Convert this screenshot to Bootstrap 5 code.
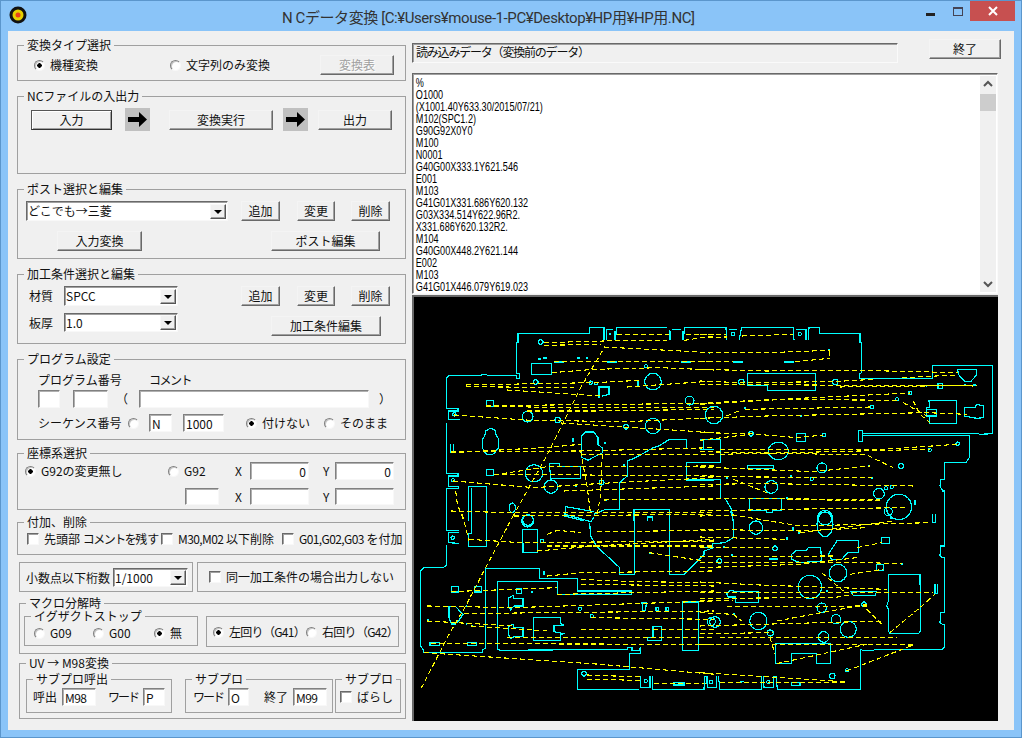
<!DOCTYPE html>
<html lang="ja">
  <head>
    <meta charset="UTF-8" />
    <meta name="viewport" content="width=device-width, initial-scale=1.0" />
    <title>NCデータ変換</title>
    <link href="https://cdn.jsdelivr.net/npm/bootstrap@5.3.0/dist/css/bootstrap.min.css" rel="stylesheet" />
    <style>
      html, body { margin: 0; width: 1022px; height: 738px; overflow: hidden; background: #8ac4f8; }
      body { font: 12px/14px "Noto Sans CJK JP", sans-serif; color: #111; }
      .win { width: 1022px; height: 738px; border: 1px solid #5b96cc; background: #8ac4f8; }
      .tbar { height: 30px; }
      .ticon { margin: 5px 0 0 8px; }
      .ttl { margin: 7px 0 0 255px; width: 653px; font: 15px/20px Roboto, "Noto Sans CJK JP", sans-serif; letter-spacing: -.42px; color: #333; white-space: nowrap; }
      .wmin { width: 9px; height: 3px; background: #222; margin: 12px 0 0 -9px; }
      .wmax { width: 10px; height: 9px; border: 1px solid #445; border-top-width: 2px; margin: 6px 0 0 18px; }
      .wclose { width: 45px; height: 20px; background: #c75050; margin-left: 7px; }
      .client { width: 1006px; height: 699px; margin-left: 7px; background: #f0f0f0; }
      .lcol { width: 404px; padding: 14px 0 0 9px; }
      .rcol { width: 602px; }
      .gb { position: relative; border: 1px solid #a0a0a0; width: 389px; }
      .gt { position: absolute; top: -7px; left: 6px; padding: 0 3px; line-height: 12px; background: #f0f0f0; white-space: nowrap; }
      .wbtn { padding: 0; border-radius: 0; font: inherit; color: #111; background: #f0f0f0; border: 1px solid; border-color: #f4f4f4 #696969 #696969 #f4f4f4; box-shadow: inset -1px -1px 0 #a0a0a0; height: 20px; flex-shrink: 0; }
      .wbtn:disabled { color: #a0a0a0; background: #f0f0f0; opacity: 1; border-color: #f4f4f4 #696969 #696969 #f4f4f4; text-shadow: 1px 1px 0 #fff; }
      .wdef { border-color: #555 #333 #333 #555; box-shadow: inset 1px 1px 0 #fff, inset -1px -1px 0 #a0a0a0; }
      .wbox { flex-shrink: 0; height: 18px; padding: 0 2px; border-radius: 0; font: inherit; line-height: 14px; color: #111; background: #fff; border: 1px solid; border-color: #808080 #f8f8f8 #f8f8f8 #808080; box-shadow: inset 1px 1px 0 #b0b0b0; }
      .wbox:focus { outline: 0; }
      .combo { flex-shrink: 0; display: flex; align-items: center; padding-left: 1px; background: #fff; border: 1px solid; border-color: #696969 #f8f8f8 #f8f8f8 #696969; box-shadow: inset 1px 1px 0 #a0a0a0; height: 20px; }
      .carrow { margin-left: auto; margin-right: 1px; width: 16px; height: 15px; background: #f0f0f0; border: 1px solid; border-color: #f8f8f8 #555 #555 #f8f8f8; box-shadow: inset -1px -1px 0 #a0a0a0; position: relative; }
      .carrow::after { content: ""; position: absolute; left: 3px; top: 5px; border: 4px solid transparent; border-top-color: #000; border-bottom: 0; }
      .opt { display: flex; align-items: center; gap: 5px; flex-shrink: 0; margin-bottom: 0; white-space: nowrap; }
      .rd, .cb { appearance: none; margin: 0; flex-shrink: 0; background: #fff; }
      .rd { width: 11px; height: 11px; border-radius: 50%; border: 1px solid; border-color: #808080 #f8f8f8 #f8f8f8 #808080; box-shadow: inset 1px 1px 0 #c8c8c8; }
      .rd:checked { background: radial-gradient(circle, #000 0 2px, #fff 2.5px); }
      .cb { width: 12px; height: 12px; border: 1px solid; border-color: #696969 #f8f8f8 #f8f8f8 #696969; box-shadow: inset 1px 1px 0 #a0a0a0; }
      .lb { flex-shrink: 0; white-space: nowrap; }
      .nar { letter-spacing: -.6px; }
      .kn { letter-spacing: -1.5px; }
      .kn2 { letter-spacing: -2px; }
      .pr { letter-spacing: -.7px; }
      .arr { width: 25px; height: 23px; background: #c0c0c0; flex-shrink: 0; }
      .rw { display: flex; align-items: center; }
      .rw-s { display: flex; align-items: flex-start; }
      .hdr { height: 20px; margin: 4px 0 0 0; padding: 1px 3px; width: 486px; letter-spacing: -1.2px; border: 1px solid; border-color: #696969 #fafafa #fafafa #696969; box-shadow: inset 1px 1px 0 #a0a0a0; }
      .lst { width: 586px; height: 221px; margin-top: 10px; background: #fff; border: 1px solid; border-color: #696969 #fafafa #fafafa #696969; box-shadow: inset 1px 1px 0 #a0a0a0; }
      .lwrap { width: 567px; overflow: hidden; }
      .lines { font: 13px/12px "Liberation Sans", sans-serif; color: #000; padding: 3px 0 0 4px; white-space: pre; transform: scaleX(.7); transform-origin: left top; }
      .sbar { width: 16px; background: #f0f0f0; margin: 2px 0 1px 0; }
      .sthumb { height: 17px; background: #cdcdcd; margin-top: 2px; }
      .cvs { width: 586px; height: 426px; margin-top: 1px; background: #000; border-left: 2px solid #696969; border-top: 2px solid #696969; display: block; }
      .cy { fill: none; stroke: #0ff; stroke-width: 3.6; shape-rendering: crispEdges; }
      .cd { fill: none; stroke: #0ff; stroke-width: 6; shape-rendering: crispEdges; }
      .ye { fill: none; stroke: #ff0; stroke-width: 3.3; stroke-dasharray: 15 9; shape-rendering: crispEdges; }
      .g1 { height: 36px; } .g2 { height: 78px; } .g3 { height: 70px; } .g4 { height: 70px; }
      .g5 { height: 81px; } .g6 { height: 57px; } .g7 { height: 33px; } .g8 { height: 30px; }
      .g9 { height: 51px; width: 387px; } .g10 { height: 56px; width: 387px; }
      .gi1 { height: 30px; width: 174px; } .gi2 { height: 31px; width: 193px; margin-top: -1px; }
      .gi3 { height: 34px; width: 146px; } .gi4 { height: 34px; width: 148px; } .gi5 { height: 34px; width: 66px; }
      .gbw1 { width: 174px; } .gbw2 { width: 209px; }
      .h17 { height: 17px; } .h18 { height: 18px; } .h19 { height: 19px; }
      .w21{width:21px}.w22{width:22px}.w23{width:23px}.w29{width:29px}.w34{width:34px}.w35{width:35px}.w38{width:38px}.w39{width:39px}.w41{width:41px}
      .w59{width:59px}.w61{width:61px}.w74{width:74px}.w75{width:75px}.w78{width:78px}.w81{width:81px}.w85{width:85px}.w87{width:87px}.w90{width:90px}.w93{width:93px}.w104{width:104px}
      .w67{width:67px}.w111{width:111px}.w12{width:12px}.w15{width:15px}.w72{width:72px}
      .w109{width:109px}.w110{width:110px}.w114{width:114px}.w121{width:121px}.w134{width:134px}.w136{width:136px}.w143{width:143px}.w150{width:150px}.w202{width:202px}.w230{width:230px}
      .l2{margin-left:2px}.l4{margin-left:4px}.l6{margin-left:6px}.l7{margin-left:7px}.l8{margin-left:8px}.l9{margin-left:9px}.l10{margin-left:10px}.l11{margin-left:11px}.l12{margin-left:12px}.l13{margin-left:13px}.l14{margin-left:14px}.l15{margin-left:15px}.l16{margin-left:16px}.l17{margin-left:17px}.l19{margin-left:19px}.l20{margin-left:20px}.l22{margin-left:22px}.l39{margin-left:39px}.l63{margin-left:63px}.l93{margin-left:93px}.l129{margin-left:129px}.l167{margin-left:167px}
      .t3{margin-top:3px}.t5{margin-top:5px}.t6{margin-top:6px}.t7{margin-top:7px}.t8{margin-top:8px}.t9{margin-top:9px}.t10{margin-top:10px}.t11{margin-top:11px}.t12{margin-top:12px}.t13{margin-top:13px}.t15{margin-top:15px}
      .b7{margin-bottom:7px}.b9{margin-bottom:9px}.b11{margin-bottom:11px}.b12{margin-bottom:12px}.b13{margin-bottom:13px}.b15{margin-bottom:15px}
      .r31{margin-left:31px}
    </style>
  </head>
  <body>
    <div class="win">
      <div class="tbar d-flex">
        <svg class="ticon" width="18" height="18" viewBox="0 0 18 18">
          <circle cx="9" cy="9" r="8.5" fill="#111" />
          <circle cx="9" cy="9" r="5.5" fill="#e6d000" />
          <circle cx="9" cy="9" r="2.5" fill="#e8401c" />
        </svg>
        <div class="ttl">N Cデータ変換 [C:¥Users¥mouse-1-PC¥Desktop¥HP用¥HP用.NC]</div>
        <div class="wmin"></div>
        <div class="wmax"></div>
        <div class="wclose d-flex align-items-center justify-content-center">
          <svg width="10" height="10" viewBox="0 0 10 10"><path d="M1 1l8 8M9 1l-8 8" stroke="#fff" stroke-width="2" /></svg>
        </div>
      </div>
      <div class="client d-flex">
        <div class="lcol">
          <div class="gb g1 b15">
            <span class="gt">変換タイプ選択</span>
            <div class="rw t9">
              <label class="opt l16 w136"><input class="rd" type="radio" name="a" checked /><span>機種変換</span></label>
              <label class="opt w150"><input class="rd" type="radio" name="a" /><span>文字列のみ変換</span></label>
              <button class="btn wbtn w74" disabled>変換表</button>
            </div>
          </div>
          <div class="gb g2 b15">
            <span class="gt">NCファイルの入出力</span>
            <div class="rw t11">
              <button class="btn wbtn wdef l13 w81">入力</button>
              <div class="arr l13"><svg width="25" height="23" viewBox="0 0 25 23"><path d="M3 9h11V4l8 7.5-8 7.5v-5H3z" fill="#000" /></svg></div>
              <button class="btn wbtn l19 w104">変換実行</button>
              <div class="arr l10"><svg width="25" height="23" viewBox="0 0 25 23"><path d="M3 9h11V4l8 7.5-8 7.5v-5H3z" fill="#000" /></svg></div>
              <button class="btn wbtn l10 w74">出力</button>
            </div>
          </div>
          <div class="gb g3 b15">
            <span class="gt">ポスト選択と編集</span>
            <div class="rw t11">
              <div class="combo l8 w202"><span>どこでも→三菱</span><span class="carrow"></span></div>
              <button class="btn wbtn l13 w39">追加</button>
              <button class="btn wbtn l17 w38">変更</button>
              <button class="btn wbtn l16 w39">削除</button>
            </div>
            <div class="rw t10">
              <button class="btn wbtn l39 w85">入力変換</button>
              <button class="btn wbtn l129 w109">ポスト編集</button>
            </div>
          </div>
          <div class="gb g4 b15">
            <span class="gt">加工条件選択と編集</span>
            <div class="rw t11">
              <span class="lb l11 w35">材質</span>
              <div class="combo w114"><span>SPCC</span><span class="carrow"></span></div>
              <button class="btn wbtn l63 w39">追加</button>
              <button class="btn wbtn l17 w38">変更</button>
              <button class="btn wbtn l16 w39">削除</button>
            </div>
            <div class="rw-s t7">
              <span class="lb l11 w35 t3">板厚</span>
              <div class="combo w114 h19"><span>1.0</span><span class="carrow"></span></div>
              <button class="btn wbtn l93 w110 t3">加工条件編集</button>
            </div>
          </div>
          <div class="gb g5 b13">
            <span class="gt">プログラム設定</span>
            <div class="rw t13">
              <span class="lb l20 w111">プログラム番号</span>
              <span class="lb kn">コメント</span>
            </div>
            <div class="rw t3">
              <input class="wbox l20 w22" />
              <input class="wbox l13 w35" />
              <span class="lb l8 w23">（</span>
              <input class="wbox w230" />
              <span class="lb l10">）</span>
            </div>
            <div class="rw t6">
              <span class="lb l20 w90">シーケンス番号</span>
              <span class="w21"><input class="rd d-block" type="radio" name="b" /></span>
              <input class="wbox w23" value="N" />
              <input class="wbox l11 w41" value="1000" />
              <label class="opt l22 w78"><input class="rd" type="radio" name="b" checked /><span>付けない</span></label>
              <label class="opt"><input class="rd" type="radio" name="b" /><span>そのまま</span></label>
            </div>
          </div>
          <div class="gb g6 b12">
            <span class="gt">座標系選択</span>
            <div class="rw t8">
              <label class="opt l7 w143"><input class="rd" type="radio" name="c" checked /><span>G92の変更無し</span></label>
              <label class="opt w67"><input class="rd" type="radio" name="c" /><span>G92</span></label>
              <span class="lb w15">X</span>
              <input class="wbox w59 text-end" value="0" />
              <span class="lb l14 w12">Y</span>
              <input class="wbox w59 text-end" value="0" />
            </div>
            <div class="rw t8">
              <input class="wbox h17 l167 w34" />
              <span class="lb l16 w15">X</span>
              <input class="wbox h17 w59" />
              <span class="lb l14 w12">Y</span>
              <input class="wbox h17 w59" />
            </div>
          </div>
          <div class="gb g7 b7">
            <span class="gt">付加、削除</span>
            <div class="rw t9">
              <label class="opt l9 w134"><input class="cb" type="checkbox" /><span>先頭部 <span class="kn">コメントを</span>残す</span></label>
              <label class="opt w121"><input class="cb" type="checkbox" /><span><span class="nar">M30,M02</span> 以下削除</span></label>
              <label class="opt"><input class="cb" type="checkbox" /><span><span class="nar">G01,G02,G03</span> を付加</span></label>
            </div>
          </div>
          <div class="d-flex gap-1 l2 b11">
            <div class="gb g8 gbw1">
              <div class="rw t5">
                <span class="lb l6 w87">小数点以下桁数</span>
                <div class="combo w75 h19"><span>1/1000</span><span class="carrow"></span></div>
              </div>
            </div>
            <div class="gb g8 gbw2">
              <div class="rw t5 h18">
                <label class="opt l11"><input class="cb" type="checkbox" /><span>同一加工条件の場合出力しない</span></label>
              </div>
            </div>
          </div>
          <div class="gb g9 l2 b9">
            <span class="gt">マクロ分解時</span>
            <div class="rw-s">
              <div class="gb gi1 l4 t12">
                <span class="gt">イグザクトストップ</span>
                <div class="rw t7 h18">
                  <label class="opt l9 w59"><input class="rd" type="radio" name="d" /><span>G09</span></label>
                  <label class="opt w61"><input class="rd" type="radio" name="d" /><span>G00</span></label>
                  <label class="opt"><input class="rd" type="radio" name="d" checked /><span>無</span></label>
                </div>
              </div>
              <div class="gb gi2 l8 t12">
                <div class="rw t6 h18">
                  <label class="opt l6 w93"><input class="rd" type="radio" name="e" checked /><span class="pr">左回り（G41）</span></label>
                  <label class="opt"><input class="rd" type="radio" name="e" /><span class="pr">右回り（G42）</span></label>
                </div>
              </div>
            </div>
          </div>
          <div class="gb g10 l2">
            <span class="gt">UV → M98変換</span>
            <div class="rw-s">
              <div class="gb gi3 l6 t15">
                <span class="gt">サブプロ呼出</span>
                <div class="rw t8">
                  <span class="lb l6 w29">呼出</span>
                  <input class="wbox w34 nar" value="M98" />
                  <span class="lb l12 w35 kn2">ワード</span>
                  <input class="wbox w22" value="P" />
                </div>
              </div>
              <div class="gb gi4 l13 t15">
                <span class="gt">サブプロ</span>
                <div class="rw t8">
                  <span class="lb l7 w35 kn2">ワード</span>
                  <input class="wbox w21" value="O" />
                  <span class="lb l15 w29">終了</span>
                  <input class="wbox w34 nar" value="M99" />
                </div>
              </div>
              <div class="gb gi5 l2 t15">
                <span class="gt">サブプロ</span>
                <div class="rw t8 h18">
                  <label class="opt l4"><input class="cb" type="checkbox" /><span>ばらし</span></label>
                </div>
              </div>
            </div>
          </div>
        </div>
        <div class="rcol">
          <div class="d-flex t8">
            <div class="hdr">読み込みデータ（変換前のデータ）</div>
            <button class="btn wbtn r31 w72">終了</button>
          </div>
          <div class="lst d-flex">
            <div class="lwrap"><div class="lines">%
O1000
(X1001.40Y633.30/2015/07/21)
M102(SPC1.2)
G90G92X0Y0
M100
N0001
G40G00X333.1Y621.546
E001
M103
G41G01X331.686Y620.132
G03X334.514Y622.96R2.
X331.686Y620.132R2.
M104
G40G00X448.2Y621.144
E002
M103
G41G01X446.079Y619.023</div></div>
            <div class="sbar d-flex flex-column">
              <svg width="16" height="16" viewBox="0 0 16 16"><path d="M4 10l4-4 4 4" fill="none" stroke="#555" stroke-width="2" /></svg>
              <div class="sthumb"></div>
              <svg class="mt-auto" width="16" height="16" viewBox="0 0 16 16"><path d="M4 6l4 4 4-4" fill="none" stroke="#555" stroke-width="2" /></svg>
            </div>
          </div>
          <svg class="cvs" width="584" height="424" viewBox="414 296 584 424">
            <!-- 左上 -->
            <g transform="translate(414 300) scale(.3333)">
              <path class="cy" d="M97 322V232L104 224H200L204 220H218L220 224H307V232H317V218H307V125H312V98H527V79H570V118M577 118V86H597M604 118L608 80H760M767 86V118M775 86H800M808 118L812 79H900" />
              <path class="cy" d="M97 322L135 324M135 330H103V356H137M97 366V517L135 519M135 525H103V556L135 558M97 660V562H135M110 430V455H118V430" />
              <path class="cy" d="M352 187H413V220H352ZM217 299H239V316H217ZM217 506H239V523H217ZM406 488H437V496H500V532H410Z" />
              <path class="cy" d="M215 390L228 382L242 386L246 400L254 415V440L240 458L228 462L215 458L205 440V415L212 405ZM555 290V258H585V280L565 285M502 470V405L515 393H540L552 410V430L566 442V455L540 468L522 478L505 470" />
              <path class="cy" d="M540 640L575 625H617V545L640 525V480L665 470L718 440L735 435L765 416H818V445M900 445H868V416H900M900 485H817V537H900M163 660V557H218V660M173 560V660M540 632L455 617L452 645L510 660M660 660V625H767V660M700 660V650H716V660" />
              <g class="cy">
                <circle cx="380" cy="123" r="7" /><circle cx="365" cy="243" r="7" /><circle cx="530" cy="245" r="5" /><circle cx="546" cy="248" r="4" /><circle cx="696" cy="196" r="5" />
                <circle cx="717" cy="242" r="25" /><circle cx="827" cy="299" r="13" /><circle cx="341" cy="347" r="16" /><circle cx="431" cy="357" r="8" /><circle cx="636" cy="377" r="7" />
                <circle cx="717" cy="375" r="23" /><circle cx="900" cy="342" r="26" /><circle cx="360" cy="517" r="26" /><circle cx="411" cy="557" r="20" /><circle cx="563" cy="545" r="7" />
                <ellipse cx="295" cy="620" rx="9" ry="14" /><circle cx="341" cy="660" r="18" /><circle cx="121" cy="340" r="5" /><circle cx="117" cy="538" r="5" />
              </g>
              <path class="cd" d="M372 173h8M388 172h12M490 170h8M520 167v8M420 183h30M580 183h28M802 183h30M586 100h6M604 90v26M767 90v26M806 90v26M884 155h5M476 412v12M672 240v14M570 425h5M628 492h5M484 554h5M573 598h5" />
              <path class="ye" d="M610 100H765M815 100H900M390 125L570 120M580 118H760M810 118L900 105M390 133L560 130M570 138L800 150L885 155M420 182H900M413 215L540 205L740 200L900 207M155 252L540 245L680 238M155 257L480 260M280 267L560 285M640 258L900 240M217 314L900 307M217 316L480 320L900 320M120 342L350 358L640 362L900 350M440 366L900 395M110 455L390 440L500 430M110 452L500 450L900 440M500 460H900M240 522L400 497L900 495M240 520L900 525M117 540L360 560L600 545L900 530M450 570L900 555M570 597L900 595M565 150L500 260L450 360L395 470L300 640M500 450L520 560L530 640M565 458L560 580L550 640M125 570L130 610L150 660M340 330H550L900 325" />
            </g>
            <!-- 右上 -->
            <g transform="translate(700 300) scale(.3333)">
              <path class="cy" d="M0 79H78L80 118M88 86H110M117 118L125 79H280L282 118M288 86H318V118M325 118L327 79H358V98H480V125H485V215L478 220V233H697V193H878V398L838 400L835 398H487M475 388H487V422H475ZM487 404H808V470L798 484H733V535L722 537L720 555L728 570H733V660" />
              <path class="cy" d="M142 217H347V269H202V253H142ZM772 206H830V222L812 242H795L778 225ZM687 298H770V368H689V345H680V320H689ZM680 325H710V345H680M793 320H825L830 310L850 315L851 350L830 352L793 345ZM714 247H728V262H714ZM289 397H317V422H289ZM0 415H62V485H0M10 415V445H0M0 535H62V590M143 493H220V503H143ZM148 592H245V628H218V635H200V628H148ZM75 592L95 625L98 660M697 640V660M706 640V660" />
              <g class="cy">
                <circle cx="99" cy="99" r="5" /><circle cx="299" cy="99" r="5" /><circle cx="124" cy="243" r="8" /><circle cx="406" cy="243" r="8" /><circle cx="630" cy="276" r="5" /><circle cx="591" cy="295" r="5" />
                <circle cx="516" cy="318" r="5" /><circle cx="42" cy="342" r="26" /><circle cx="153" cy="398" r="7" /><circle cx="372" cy="402" r="5" /><circle cx="773" cy="428" r="5" /><circle cx="689" cy="447" r="5" />
                <ellipse cx="235" cy="450" rx="30" ry="26" /><circle cx="603" cy="495" r="7" /><circle cx="366" cy="501" r="15" /><circle cx="335" cy="534" r="5" /><circle cx="214" cy="558" r="19" />
                <circle cx="558" cy="562" r="5" /><circle cx="575" cy="558" r="5" /><circle cx="537" cy="578" r="16" /><circle cx="597" cy="618" r="38" /><circle cx="375" cy="650" r="22" /><circle cx="565" cy="632" r="12" />
              </g>
              <path class="cd" d="M100 183h28M252 183h30M388 145v5M388 170v5M677 255h5M793 253h5M820 253h8M133 322h5M198 345h5M300 345h5M504 495h5M78 530h5M270 525h5M513 530h5M261 588v6M645 598v14M0 537h12" />
              <path class="ye" d="M0 100H78M0 110L80 108M125 105L280 100M0 155H205L390 148M388 150L390 172M0 182H100M285 182L390 172M0 205L200 210L480 208L775 215M0 240L120 245L400 242L520 235M0 250L820 255M420 258L830 253M607 230L770 222M0 307L230 295L590 298M0 310L300 292L630 276M135 325L515 318M80 345L120 328M0 352L200 345L680 335L800 340M640 300L660 340L690 365M610 305L680 345M0 395L150 398L290 410L370 402M0 418L150 400M60 445L520 447L770 430M0 452L500 462L580 500M60 460L690 445M0 498L340 512L510 495M0 527L515 530M0 550L200 548L640 555M100 535L200 575M0 593L540 595M260 595L545 600M0 630L250 625L620 620" />
            </g>
            <!-- 左下 -->
            <g transform="translate(414 510) scale(.3333)">
              <path class="cy" d="M97 0V58H135M135 65H103V95L135 97M97 103V162L88 170H30L20 180V405L28 416V424H205V418L215 410V172H377V203H490V240H653V250H430V211H250V415L260 418L640 415V409H654V418H675L680 410V428H646V475H490V536H675M680 495V530H708V495M715 495L717 536H870L873 495M880 495V530H900" />
              <path class="cy" d="M173 0V68H163V107H218V0M327 55H371V124H327V100L325 70ZM455 0V10L530 32L540 20M527 35L530 75L550 108L617 170V190H662V0M767 0V190H810L870 130V120L900 110M700 25V18H716V25" />
              <path class="cy" d="M112 226H134V243H112ZM181 226H203V243H181ZM307 234H323V248H307ZM283 262L297 253L300 262H327V285H300L290 296L283 285ZM283 347L297 340L300 350H327V377H300L290 382L283 370ZM358 320H440V337L448 342L420 345V362L448 368L440 372V388H358ZM105 287H125L147 310L130 335H110L105 320ZM48 395H76V403H48ZM160 395H188V403H160ZM805 273H854V418H805ZM684 274H697L695 298H686ZM726 290H734V298H726ZM756 289H764V298H756ZM717 347H743V388H700V380H717ZM780 514H810V522H780Z" />
              <g class="cy">
                <circle cx="342" cy="27" r="16" /><circle cx="498" cy="293" r="5" /><circle cx="533" cy="315" r="5" /><circle cx="510" cy="488" r="7" /><circle cx="384" cy="90" r="5" /><circle cx="116" cy="80" r="5" /><circle cx="695" cy="510" r="5" /><circle cx="890" cy="513" r="5" /><circle cx="892" cy="332" r="12" />
              </g>
              <path class="cd" d="M40 327h6M112 338h14M155 340h5M172 345h6M155 285h5M354 240v6M390 180v12M705 126h10" />
              <path class="ye" d="M110 0L290 5L900 5M300 15L900 10M550 62L900 58M400 70L430 58L500 65M165 85L320 95L900 90M370 120L540 105L900 85M400 105H900M705 125L870 150M400 195L500 185L900 180M500 205L660 212L900 215M500 220L900 225M430 250L900 240M110 242L430 230M40 285L300 290L900 270M150 308L400 305L900 300M40 330L300 345M530 320L900 325M500 355H900M170 345L400 360M280 380H900M50 398L900 400M30 425L560 460L900 490M520 492L680 498M520 505L680 508M720 518H880M300 10L215 170L155 285L105 370L20 535M145 10L165 90" />
            </g>
            <!-- 右下 -->
            <g transform="translate(700 510) scale(.3333)">
              <path class="cy" d="M733 0V105H722L720 135L728 140H733V305H722L720 335L728 340H733V408L727 415H525L520 419H490L482 415V535H232L228 495M185 495V535H60L55 495M0 535H12L14 495M20 495L22 530H50V495M190 495L192 530H220L222 495M705 220V248H712V220M697 10V35H706V8" />
              <path class="cy" d="M545 79H569V98H545ZM529 160H551V179H529ZM565 190H660L662 360L655 368H570L565 360V295L560 285L565 270ZM412 88H476V124H445L425 145H395L385 130ZM275 130L290 118H320L325 110H362L365 150L300 155L275 145ZM0 110H38V98L75 95L100 80V30L92 0M226 397H392V458H349V428H274V458H226ZM105 241H176V275H107V258H85L80 248L90 238ZM452 242H530L525 253H460ZM275 515H300V523H275ZM108 515L132 512" />
              <g class="cy">
                <ellipse cx="375" cy="40" rx="24" ry="37" /><circle cx="168" cy="50" r="20" /><circle cx="414" cy="186" r="26" /><circle cx="330" cy="228" r="35" /><circle cx="175" cy="330" r="26" /><circle cx="45" cy="333" r="16" /><circle cx="445" cy="355" r="24" />
                <circle cx="371" cy="378" r="16" /><circle cx="365" cy="290" r="14" /><circle cx="408" cy="325" r="14" /><circle cx="492" cy="280" r="7" /><circle cx="211" cy="366" r="9" /><circle cx="397" cy="495" r="8" /><circle cx="441" cy="478" r="5" />
                <circle cx="225" cy="112" r="7" /><circle cx="58" cy="150" r="7" /><circle cx="33" cy="513" r="5" /><circle cx="205" cy="513" r="5" />
              </g>
              <path class="cd" d="M208 145h26M570 22h10M278 48v12M296 62v8M262 78v8M32 112h6M70 108h5M94 133h5M602 158h6M100 310h6M378 240h6" />
              <path class="ye" d="M0 15L100 12L300 45L690 35M0 55L300 60L500 50M0 78L260 85M300 65L580 30M0 110H220M470 110L545 95M0 137L400 135M0 155H500L605 158M0 170L300 160L470 140M450 190L550 175M0 213L180 222L560 235M0 245H700M0 262L400 260L460 250M0 268H100M80 287L500 285M0 305L100 310M0 345L550 330M230 330L500 280M500 295L550 345M100 310L125 330M0 368L220 365M60 380H590M0 400L640 402M230 458L500 400M440 480L640 402M0 485L400 510M60 515L440 513M570 365L660 290L705 250M365 185L430 240M210 380L225 430" />
            </g>
          </svg>
        </div>
      </div>
    </div>
    <script src="https://cdn.jsdelivr.net/npm/bootstrap@5.3.0/dist/js/bootstrap.bundle.min.js"></script>
  </body>
</html>
